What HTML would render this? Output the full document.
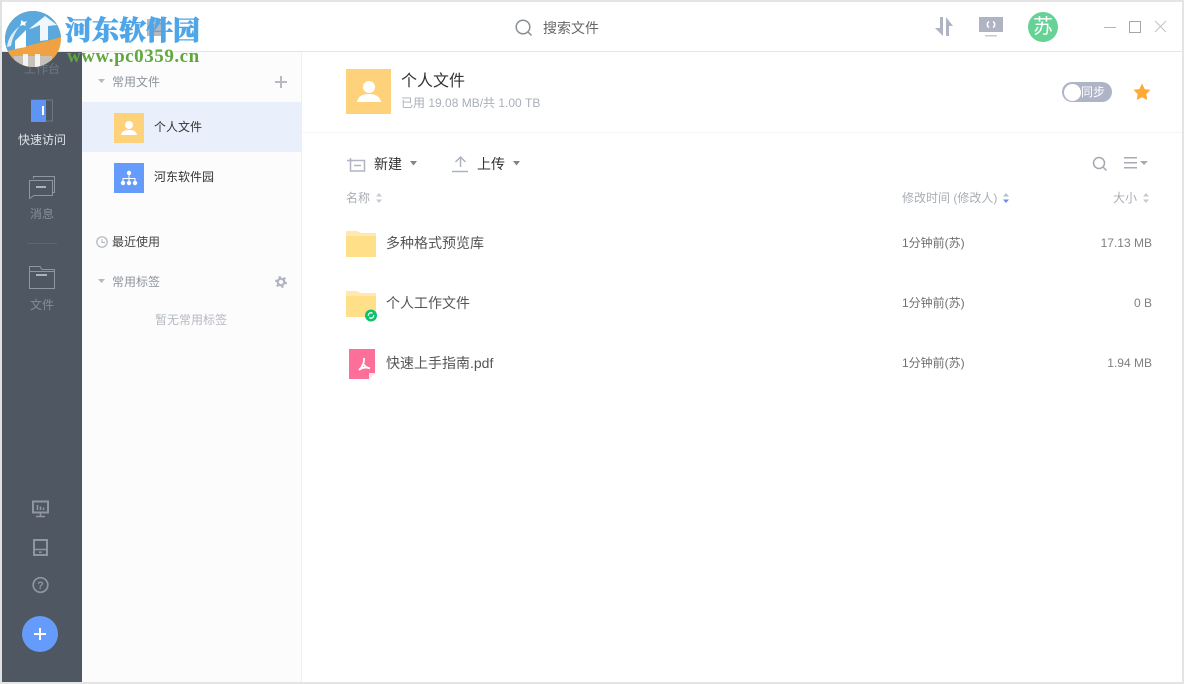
<!DOCTYPE html>
<html><head><meta charset="utf-8">
<style>
html,body{margin:0;padding:0;background:#fff}
body{width:1184px;height:684px;position:relative;overflow:hidden;font-family:"Liberation Sans","Noto Sans CJK SC",sans-serif;color:#333}
.a{position:absolute;white-space:nowrap}
svg{position:absolute;display:block}
.t{font-size:12px;line-height:16px}
.g{color:#8e939c}
</style></head><body>
<!-- window frame -->
<div class="a" style="left:0;top:0;width:1184px;height:2px;background:#e4e4e4"></div>
<div class="a" style="left:0;top:0;width:2px;height:684px;background:#dfe1e3"></div>
<div class="a" style="left:1182px;top:0;width:2px;height:684px;background:#e4e4e4"></div>
<div class="a" style="left:0;top:682px;width:1184px;height:2px;background:#e4e4e4"></div>
<div class="a" style="left:2px;top:51px;width:1180px;height:1px;background:#e3e5e8"></div>
<!-- sidebars -->
<div class="a" style="left:2px;top:52px;width:80px;height:630px;background:#4f5862"></div>
<div class="a" style="left:82px;top:52px;width:219px;height:630px;background:#fcfcfd"></div>
<div class="a" style="left:301px;top:52px;width:1px;height:630px;background:#eeeff1"></div>
<div class="a" style="left:82px;top:102px;width:219px;height:50px;background:#e9f0fb"></div>
<div class="a" style="left:302px;top:132px;width:880px;height:1px;background:#f4f5f6"></div>

<!-- left nav -->
<div class="a t" style="left:2px;width:80px;text-align:center;top:61px;color:#6f7782">工作台</div>
<svg style="left:30px;top:99px" width="24" height="24"><rect x="1.500" y="1" width="21" height="21" fill="none" stroke="#6c7682"/><path d="M1 1L16 1L16 23L1 23Z" fill="#5f95f2"/><rect x="12" y="7" width="2" height="9" fill="#fff"/></svg>
<div class="a t" style="left:2px;width:80px;text-align:center;top:132px;color:#dfe3e7">快速访问</div>
<svg style="left:28px;top:175px" width="28" height="24" fill="none" stroke="#8f97a3"><path d="M5.500 3.500V1.500H26.500V17.500H24"/><path d="M1.500 5.500H24.500V20.500H6L1.500 23.500Z" fill="#4f5862"/><rect x="8" y="11" width="10" height="2" fill="#aab1ba" stroke="none"/></svg>
<div class="a t" style="left:2px;width:80px;text-align:center;top:206px;color:#858d98">消息</div>
<div class="a" style="left:27px;top:243px;width:30px;height:1px;background:#5f6872"></div>
<svg style="left:28px;top:265px" width="28" height="25" fill="none" stroke="#8f97a3"><path d="M1.500 23.500V1.500H12L14 4.500H26.500V23.500Z"/><path d="M1.500 6.500H26.500"/><rect x="8" y="9" width="11" height="2" fill="#aab1ba" stroke="none"/></svg>
<div class="a t" style="left:2px;width:80px;text-align:center;top:297px;color:#858d98">文件</div>
<svg style="left:32px;top:500px" width="17" height="18" fill="none" stroke="#8f96a2"><rect x="1" y="1.500" width="15" height="11" stroke-width="2"/><path d="M8.500 13V16M4 16.500H13" stroke-width="1.500"/><path d="M5.500 10V5M8.500 10V6.500M11.500 10V7.500" stroke-width="1.500"/></svg>
<svg style="left:33px;top:539px" width="15" height="17" fill="none" stroke="#8f96a2" stroke-width="2"><rect x="1" y="1" width="13" height="15"/><path d="M1 10.500H14" stroke-width="1.500"/><rect x="6" y="12.500" width="2.500" height="1.500" fill="#8f96a2" stroke="none"/></svg>
<svg style="left:32px;top:576px" width="17" height="18"><circle cx="8.500" cy="9" r="7.300" fill="none" stroke="#8f96a2" stroke-width="1.700"/><text x="8.500" y="13" text-anchor="middle" font-size="11" font-weight="bold" fill="#8f96a2" font-family="Liberation Sans">?</text></svg>
<div class="a" style="left:22px;top:616px;width:36px;height:36px;border-radius:50%;background:#659cfb"></div>
<div class="a" style="left:34px;top:632.500px;width:12px;height:2.500px;background:#fff"></div>
<div class="a" style="left:38.800px;top:628px;width:2.500px;height:12px;background:#fff"></div>

<!-- second panel -->
<svg style="left:98px;top:78px" width="8" height="6"><path d="M0 1H7L3.500 5Z" fill="#b4b8c0"/></svg>
<div class="a t g" style="left:112px;top:74px">常用文件</div>
<svg style="left:275px;top:76px" width="12" height="12"><path d="M0 5H12V7H0ZM5 0H7V12H5Z" fill="#b4b9c4"/></svg>
<svg style="left:114px;top:113px" width="30" height="30"><rect width="30" height="30" fill="#fed27a"/><circle cx="15" cy="12" r="4" fill="#fff"/><path d="M7 22C8 18 11 17 15 17S22 18 23 22Z" fill="#fff"/></svg>
<div class="a t" style="left:154px;top:119px;color:#333">个人文件</div>
<svg style="left:114px;top:163px" width="30" height="30"><rect width="30" height="30" fill="#659cfb"/><circle cx="15" cy="10" r="2.200" fill="#fff"/><path d="M14.500 12H15.500V15H21.500V18H20.500V16H15.500V18H14.500V16H9.500V18H8.500V15H14.500Z" fill="#fff"/><circle cx="9" cy="20" r="2.200" fill="#fff"/><circle cx="15" cy="20" r="2.200" fill="#fff"/><circle cx="21" cy="20" r="2.200" fill="#fff"/></svg>
<div class="a t" style="left:154px;top:169px;color:#333">河东软件园</div>
<svg style="left:96px;top:236px" width="12" height="12" fill="none" stroke="#b0b5bd"><circle cx="6" cy="6" r="5.200" stroke-width="1.200"/><path d="M6 3V6.500H9"/></svg>
<div class="a t" style="left:112px;top:234px;color:#444">最近使用</div>
<svg style="left:98px;top:278px" width="8" height="6"><path d="M0 1H7L3.500 5Z" fill="#b4b8c0"/></svg>
<div class="a t g" style="left:112px;top:274px">常用标签</div>
<svg style="left:275px;top:276px" width="12" height="12" fill="none" stroke="#aeb3bd"><circle cx="6" cy="6" r="3.300" stroke-width="2.200"/><circle cx="6" cy="6" r="5" stroke-width="2" stroke-dasharray="2.200 3.040"/></svg>
<div class="a t" style="left:155px;top:312px;color:#b5b9c0">暂无常用标签</div>

<!-- header -->
<svg style="left:514px;top:18px" width="20" height="20" fill="none" stroke="#8a8f98" stroke-width="1.500"><circle cx="9" cy="9" r="6.800"/><path d="M14 14L17.500 17.500"/></svg>
<div class="a" style="left:543px;top:20px;font-size:14px;line-height:16px;color:#666">搜索文件</div>
<svg style="left:934px;top:16px" width="20" height="21"><path d="M6 1H9V20L1 12H6Z M12 20H15V10H19L12 1Z" fill="#afb3c2"/></svg>
<svg style="left:979px;top:17px" width="24" height="20"><rect width="24" height="15" fill="#afb3c2"/><path d="M10 4.500A3.500 3.500 0 0 0 10 10.500M14 4.500A3.500 3.500 0 0 1 14 10.500" fill="none" stroke="#fff" stroke-width="1.500"/><rect x="6" y="18" width="12" height="1.500" fill="#c8cbd4"/></svg>
<div class="a" style="left:1028px;top:12px;width:30px;height:30px;border-radius:50%;background:#66d296;color:#fff;font-size:20px;line-height:30px;text-align:center">苏</div>
<svg style="left:1103px;top:19px" width="68" height="16" fill="none"><path d="M1 8.500H13" stroke="#b4b6ba"/><rect x="26.500" y="2.500" width="11" height="11" stroke="#a4a6aa"/><path d="M52 2L63 13M63 2L52 13" stroke="#c0c2c5"/></svg>

<!-- content header -->
<svg style="left:346px;top:69px" width="45" height="45"><rect width="45" height="45" fill="#fed27a"/><circle cx="23" cy="18" r="6" fill="#fff"/><path d="M11 33C12 27 17 25 23 25S34 27 35 33Z" fill="#fff"/></svg>
<div class="a" style="left:401px;top:73px;font-size:16px;line-height:18px;color:#333">个人文件</div>
<div class="a t" style="left:401px;top:95px;color:#a9afb9">已用 19.08 MB/共 1.00 TB</div>
<div class="a" style="left:1062px;top:82px;width:50px;height:20px;border-radius:10px;background:#afb3c6"></div>
<div class="a" style="left:1063.500px;top:83.500px;width:17px;height:17px;border-radius:50%;background:#fff"></div>
<div class="a t" style="left:1081px;top:84px;color:#fff">同步</div>
<svg style="left:1133px;top:83px" width="18" height="18"><path d="M9 .5L11.700 6.100L17.500 6.900L13.300 11.100L14.300 17L9 14.200L3.700 17L4.700 11.100L.5 6.900L6.300 6.100Z" fill="#fdaa36"/></svg>

<!-- toolbar -->
<svg style="left:346px;top:155px" width="20" height="18" fill="none" stroke="#b0b4c2" stroke-width="1.500"><path d="M4.500 3V16H18.500V5.500H1M8 10.500H15"/></svg>
<div class="a" style="left:374px;top:156px;font-size:14px;line-height:16px;color:#333">新建</div>
<svg style="left:410px;top:161px" width="8" height="6"><path d="M0 0H7L3.500 4.500Z" fill="#80848e"/></svg>
<svg style="left:452px;top:155px" width="17" height="18" fill="none" stroke="#aeb2c0" stroke-width="1.500"><path d="M8.500 12V2M3.500 7L8.500 2L13.500 7M0 16.500H16"/></svg>
<div class="a" style="left:477px;top:156px;font-size:14px;line-height:16px;color:#333">上传</div>
<svg style="left:513px;top:161px" width="8" height="6"><path d="M0 0H7L3.500 4.500Z" fill="#80848e"/></svg>
<svg style="left:1092px;top:156px" width="16" height="16" fill="none" stroke="#a2a7b0" stroke-width="1.500"><circle cx="7" cy="7" r="5.500"/><path d="M11 11L14.500 14.500"/></svg>
<svg style="left:1123px;top:156px" width="27" height="14"><path d="M1 1H14V2.500H1ZM1 6H14V7.500H1ZM1 11H14V12.500H1Z" fill="#a6aab5"/><path d="M17 5H25L21 9Z" fill="#a6aab5"/></svg>

<!-- table head -->
<div class="a t" style="left:346px;top:190px;color:#a9adb5">名称</div>
<svg style="left:375px;top:193px" width="8" height="10"><path d="M4 0L7 3.500H1ZM4 10L1 6.500H7Z" fill="#c6c9d0"/></svg>
<div class="a t" style="left:902px;top:190px;color:#a9adb5">修改时间 (修改人)</div>
<svg style="left:1002px;top:193px" width="8" height="10"><path d="M4 0L7 3.500H1Z" fill="#b8bdc7"/><path d="M4 10L1 6.500H7Z" fill="#5f8fe8"/></svg>
<div class="a t" style="left:1113px;top:190px;color:#a9adb5">大小</div>
<svg style="left:1142px;top:193px" width="8" height="10"><path d="M4 0L7 3.500H1ZM4 10L1 6.500H7Z" fill="#c6c9d0"/></svg>

<!-- rows -->
<svg style="left:346px;top:231px" width="30" height="27"><path d="M0 0H11L15 2H30V26H0Z" fill="#ffe9b0"/><rect y="5" width="30" height="21" fill="#ffdf88"/></svg>
<div class="a" style="left:386px;top:235px;font-size:14px;line-height:16px;color:#555">多种格式预览库</div>
<div class="a t" style="left:902px;top:235px;color:#707070">1分钟前(苏)</div>
<div class="a t" style="left:1000px;width:152px;text-align:right;top:235px;color:#808080">17.13 MB</div>

<svg style="left:346px;top:291px" width="32" height="32"><path d="M0 0H11L15 2H30V26H0Z" fill="#ffe9b0"/><rect y="5" width="30" height="21" fill="#ffdf88"/><circle cx="25" cy="24.500" r="6" fill="#0fc16f"/><circle cx="25" cy="24.500" r="2.700" fill="none" stroke="#fff" stroke-width="1.300" stroke-dasharray="6 2"/></svg>
<div class="a" style="left:386px;top:295px;font-size:14px;line-height:16px;color:#555">个人工作文件</div>
<div class="a t" style="left:902px;top:295px;color:#707070">1分钟前(苏)</div>
<div class="a t" style="left:1000px;width:152px;text-align:right;top:295px;color:#808080">0 B</div>

<svg style="left:349px;top:349px" width="26" height="30"><path d="M0 0H26V24L20 30H0Z" fill="#fb6f98"/><path d="M26 24L20 30V24Z" fill="#fde2ea"/><path d="M15 9C15.500 13 13.500 18 10 21M14.500 15C16 18 18.500 19 21 19.300M10 21C13 18.500 17 18 21 19.300" fill="none" stroke="#fff" stroke-width="1.800"/></svg>
<div class="a" style="left:386px;top:355px;font-size:14px;line-height:16px;color:#555">快速上手指南.pdf</div>
<div class="a t" style="left:902px;top:355px;color:#707070">1分钟前(苏)</div>
<div class="a t" style="left:1000px;width:152px;text-align:right;top:355px;color:#808080">1.94 MB</div>

<!-- title glyph under watermark -->
<div class="a" style="left:147px;top:19px;width:17px;height:17px;background:#b5b8bc"></div>

<!-- watermark -->
<svg style="left:4px;top:10px" width="58" height="58">
<defs><clipPath id="c"><circle cx="29" cy="29" r="28"/></clipPath></defs>
<g clip-path="url(#c)">
<rect width="58" height="58" fill="#efa244"/>
<path d="M0 0H58V27L4 41L0 38Z" fill="#5aa8dc"/>
<path d="M10 46H48V58H10Z" fill="#c5c2bb"/>
<path d="M19 44H24V58H19ZM31 44H36V58H31Z" fill="#f4f4f4"/>
<path d="M11 31L22 20V37L11 39Z" fill="#fff"/>
<path d="M25 19L41 6L53 15L44 16V30L36 31V15L29 18Z" fill="#fff" opacity=".9"/>
<path d="M3 37C4 28 9 21 16 16C11 22 8 29 7 36Z" fill="#fff" opacity=".8"/>
<path d="M17 10L20 12L23 11L21 14L22 16L19 15L16 16L17 13Z" fill="#fff"/>
</g></svg>
<div class="a" style="left:65px;top:12px;font-family:'Noto Serif CJK SC','Liberation Serif',serif;font-weight:900;font-size:27px;line-height:34px;color:#4ea6e8;-webkit-text-stroke:.6px #4ea6e8">河东软件园</div>
<div class="a" style="left:67px;top:47px;font-family:'Liberation Serif',serif;font-weight:bold;font-size:19px;line-height:20px;color:#5fa83e;letter-spacing:.55px">www.pc0359.cn</div>
</body></html>
